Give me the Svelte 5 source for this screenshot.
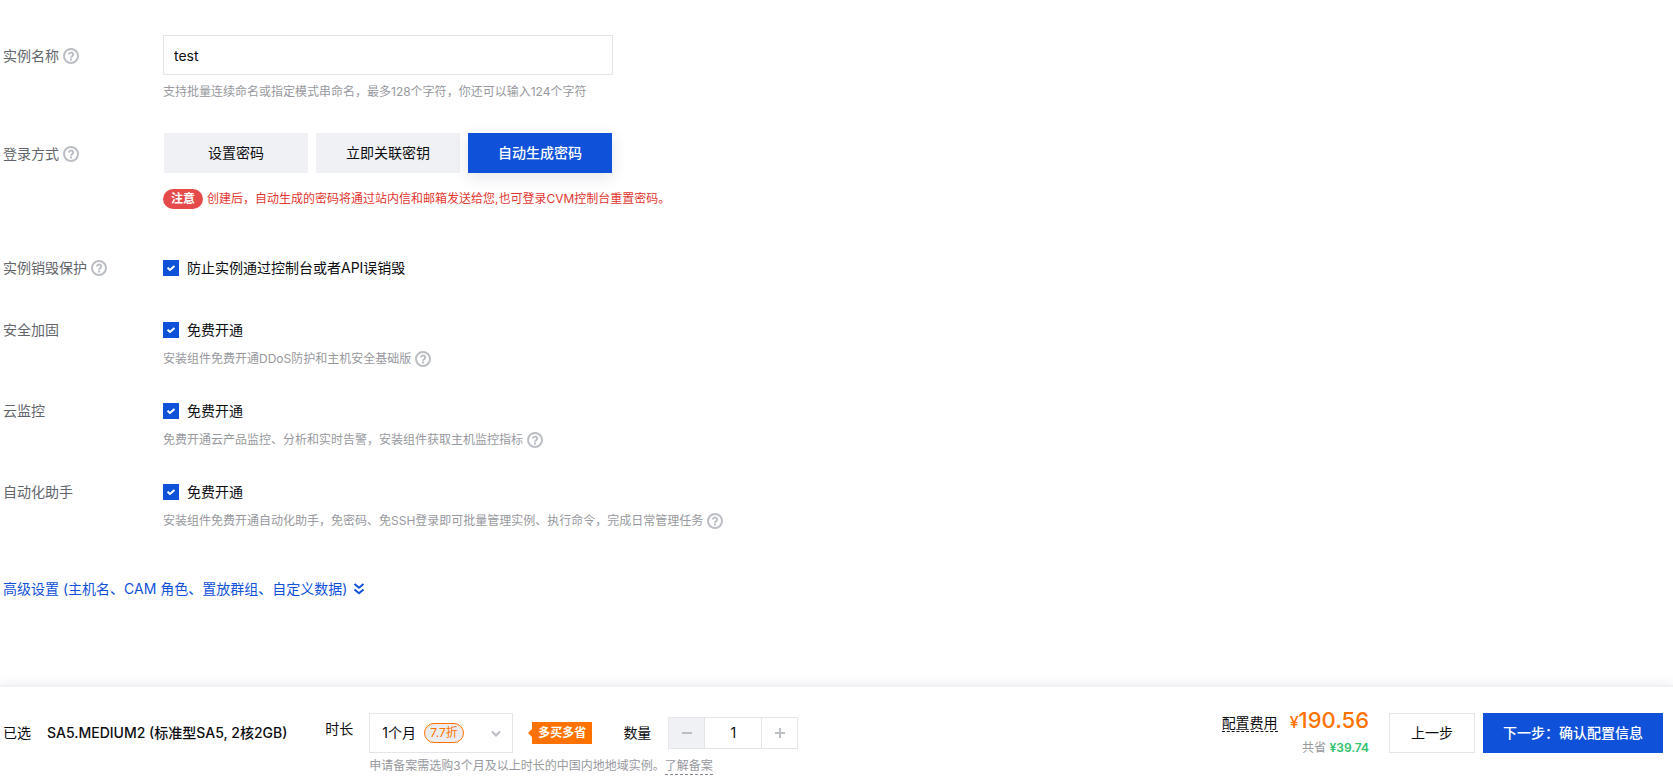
<script>
    const maxName = 128
    const unitPrice = 190.56
    const unitSaved = 39.74
    const loginTypes = ['设置密码', '立即关联密钥', '自动生成密码']
    const durations = ['1个月', '2个月', '3个月', '6个月', '1年']

    let name = 'test'
    let login = '自动生成密码'
    let protect = true
    let duration = '1个月'
    let count = 1
    let services = [
        { id: 'security', label: '安全加固', checked: true, hint: '安装组件免费开通DDoS防护和主机安全基础版' },
        { id: 'monitor', label: '云监控', checked: true, hint: '免费开通云产品监控、分析和实时告警，安装组件获取主机监控指标' },
        { id: 'assistant', label: '自动化助手', checked: true, hint: '安装组件免费开通自动化助手，免密码、免SSH登录即可批量管理实例、执行命令，完成日常管理任务' }
    ]

    $: left = maxName - name.length
    $: total = (unitPrice * count).toFixed(2)
    $: saved = (unitSaved * count).toFixed(2)
</script>

{#snippet help()}
    <svg class="help" viewBox="0 0 16 16" width="16" height="16" aria-hidden="true">
        <circle cx="8" cy="8" r="7" />
        <path d="M5.9 6.6a2.1 2.1 0 1 1 3.3 1.7C8.4 8.8 8 9 8 9.7" />
        <path d="M8 10.6v1.8" />
    </svg>
{/snippet}

<div class="page" lang="zh-CN">
    <main>
        <div class="row">
            <label class="name tall" for="instance-name">实例名称 {@render help()}</label>
            <div class="content">
                <input class="text" id="instance-name" type="text" maxlength={maxName} bind:value={name}>
                <p class="hint">支持批量连续命名或指定模式串命名，最多{maxName}个字符，你还可以输入{left}个字符</p>
            </div>
        </div>

        <div class="row login">
            <div class="name tall" id="login-label">登录方式 {@render help()}</div>
            <div class="content">
                <div class="segment" role="group" aria-labelledby="login-label">
                    {#each loginTypes as type}
                        <button type="button" class:active={login === type} on:click={() => login = type}>{type}</button>
                    {/each}
                </div>
                <p class="notice"><b>注意</b>创建后，自动生成的密码将通过站内信和邮箱发送给您,也可登录CVM控制台重置密码。</p>
            </div>
        </div>

        <div class="row protect">
            <div class="name">实例销毁保护 {@render help()}</div>
            <label class="check"><input type="checkbox" bind:checked={protect}>防止实例通过控制台或者API误销毁</label>
        </div>

        {#each services as item (item.id)}
            <div class="row">
                <div class="name">{item.label}</div>
                <div class="content">
                    <label class="check"><input type="checkbox" bind:checked={item.checked}>免费开通</label>
                    <p class="hint service">{item.hint} {@render help()}</p>
                </div>
            </div>
        {/each}

        <a class="advanced" href="#advanced">
            高级设置 (主机名、CAM 角色、置放群组、自定义数据)
            <svg viewBox="0 0 12 12" width="12" height="12" aria-hidden="true">
                <path d="M1.5 1 6 4.8 10.5 1M1.5 6.5 6 10.3l4.5-3.8" />
            </svg>
        </a>
    </main>

    <footer>
        <div class="chosen">
            <span>已选</span>
            <strong>SA5.MEDIUM2 (标准型SA5, 2核2GB)</strong>
        </div>
        <label class="time" for="duration">时长</label>
        <div class="order">
            <div class="controls">
                <div class="select">
                    <select id="duration" bind:value={duration}>
                        {#each durations as d}
                            <option>{d}</option>
                        {/each}
                    </select>
                    <span class="discount">7.7折</span>
                    <svg viewBox="0 0 10 10" width="10" height="10" aria-hidden="true"><path d="M1 2.5 5 6.5l4-4" /></svg>
                </div>
                <span class="tag">多买多省</span>
                <label for="count">数量</label>
                <div class="stepper">
                    <button type="button" aria-label="减少" disabled={count <= 1} on:click={() => count--}>
                        <svg viewBox="0 0 10 10" width="10" height="10"><path d="M0 5h10" /></svg>
                    </button>
                    <input id="count" type="text" inputmode="numeric" bind:value={count}>
                    <button type="button" aria-label="增加" on:click={() => count++}>
                        <svg viewBox="0 0 10 10" width="10" height="10"><path d="M0 5h10M5 0v10" /></svg>
                    </button>
                </div>
            </div>
            <p class="hint">申请备案需选购3个月及以上时长的中国内地地域实例。<a href="#beian">了解备案</a></p>
        </div>
        <div class="cost">
            <div class="total">
                <span class="cost-label">配置费用</span>
                <span class="price"><small>¥</small>{total}</span>
            </div>
            <div class="saved">共省 <b>¥{saved}</b></div>
        </div>
        <div class="actions">
            <button type="button" class="prev">上一步</button>
            <button type="button" class="next">下一步：确认配置信息</button>
        </div>
    </footer>
</div>

<style>
    :global(body) {
        margin: 0;
        background: #fff;
    }
    .page {
        display: flex;
        flex-direction: column;
        min-height: 100vh;
        color: #0c0d10;
        font: 14px/20px Inter, "Noto Sans CJK SC", sans-serif;
    }
    .page * {
        box-sizing: border-box;
    }
    button, input, select {
        font: inherit;
        color: inherit;
        border-radius: 0;
    }
    button {
        cursor: pointer;
    }
    p {
        margin: 0;
    }
    svg {
        fill: none;
        stroke: currentColor;
        flex: none;
    }
    main {
        padding: 35px 3px 24px;
    }
    .row {
        display: flex;
        margin-bottom: 32px;
    }
    .name {
        display: flex;
        align-items: center;
        gap: 4px;
        width: 160px;
        height: 20px;
        flex: none;
        color: #62656b;
    }
    .tall {
        height: 42px;
    }
    .help {
        color: #bbbec4;
        stroke-width: 2;
    }
    .text {
        display: block;
        width: 450px;
        height: 40px;
        padding: 0 10px;
        border: 1px solid #e4e5e8;
        outline: none;
    }
    .hint {
        display: flex;
        align-items: center;
        gap: 4px;
        margin-top: 7px;
        margin-bottom: -1px;
        font-size: 12px;
        color: #97999e;
    }
    .service {
        margin: 9px 0 0;
    }
    .login {
        margin-bottom: 49px;
    }
    .protect {
        margin-bottom: 42px;
    }
    .segment {
        display: flex;
        gap: 8px;
        padding-left: 1px;
    }
    .segment button {
        width: 144px;
        height: 40px;
        padding: 0;
        border: 0;
        background: #f0f1f5;
    }
    .segment .active {
        background: #0f52d9;
        color: #fff;
        font-weight: 500;
        box-shadow: 0 4px 16px rgba(30, 40, 70, .12);
    }
    .notice {
        display: flex;
        align-items: center;
        gap: 4px;
        margin-top: 16px;
        font-size: 12px;
        color: #e2362f;
    }
    .notice b {
        padding: 0 8px;
        border-radius: 10px;
        background: #e54b4b;
        color: #fff;
    }
    .check {
        display: flex;
        align-items: center;
        gap: 8px;
    }
    .check input {
        appearance: none;
        width: 16px;
        height: 16px;
        margin: 0;
        border: 1px solid #c4c7cc;
    }
    .check input:checked {
        border-color: #0f52d9;
        background: #0f52d9 url("data:image/svg+xml,%3Csvg xmlns='http://www.w3.org/2000/svg' viewBox='0 0 14 14'%3E%3Cpath d='M3.5 6.8 6 9l4.5-4' fill='none' stroke='white' stroke-width='2'/%3E%3C/svg%3E") center / 14px;
    }
    .advanced {
        display: inline-flex;
        align-items: center;
        gap: 6px;
        margin-top: 16px;
        color: #0f52d9;
        text-decoration: none;
    }
    .advanced svg {
        stroke-width: 2;
    }
    footer {
        display: flex;
        align-items: flex-start;
        margin-top: auto;
        padding: 26px 10px 2px 3px;
        border-top: 2px solid #f0f1f5;
        box-shadow: 0 -2px 10px rgba(30, 40, 70, .07);
        white-space: nowrap;
    }
    .chosen {
        display: flex;
        gap: 16px;
        line-height: 40px;
    }
    strong {
        font-weight: 500;
    }
    .time {
        margin: 0 16px 0 38px;
        line-height: 32px;
    }
    .controls {
        display: flex;
        align-items: center;
    }
    .order .hint {
        gap: 0;
        margin: 3px 0 0;
    }
    .hint a {
        color: inherit;
        line-height: 16px;
        text-decoration: none;
        border-bottom: 1px dashed #85888e;
    }
    .select {
        position: relative;
        width: 144px;
        height: 40px;
    }
    select {
        appearance: none;
        width: 100%;
        height: 100%;
        padding: 0 12px;
        border: 1px solid #e4e5e8;
        background: #fff;
    }
    .discount {
        position: absolute;
        top: 10px;
        left: 55px;
        height: 20px;
        padding: 0 5px;
        border: 1px solid #ff7200;
        border-radius: 10px;
        background: #ececef;
        color: #ff7200;
        font-size: 12px;
        line-height: 18px;
        pointer-events: none;
    }
    .select svg {
        position: absolute;
        top: 16px;
        right: 12px;
        color: #bbbec4;
        stroke-width: 2;
        pointer-events: none;
    }
    .tag {
        position: relative;
        margin: 0 31px 0 19px;
        padding: 0 6px;
        background: #ff7200;
        color: #fff;
        font-size: 12px;
        font-weight: 700;
        line-height: 22px;
    }
    .tag::before {
        content: "";
        position: absolute;
        top: 7px;
        left: -4px;
        border: solid transparent;
        border-width: 4px 4px 4px 0;
        border-right-color: #ff7200;
    }
    .stepper {
        display: flex;
        width: 130px;
        height: 32px;
        margin-left: 17px;
        border: 1px solid #e4e5e8;
    }
    .stepper button {
        display: flex;
        align-items: center;
        justify-content: center;
        width: 35px;
        flex: none;
        padding: 0;
        border: 0;
        background: #fff;
        color: #bbbec4;
        stroke-width: 2;
    }
    .stepper button:disabled {
        background: #f0f1f5;
    }
    .stepper input {
        flex: 1;
        min-width: 0;
        padding: 0;
        border: solid #e4e5e8;
        border-width: 0 1px;
        text-align: center;
        outline: none;
    }
    .cost {
        margin: -5px 20px 0 auto;
        text-align: right;
    }
    .total {
        display: flex;
        align-items: baseline;
        gap: 12px;
        line-height: 24px;
    }
    .cost-label {
        line-height: 16px;
        border-bottom: 1px dashed #16181d;
    }
    .price {
        color: #ff7200;
        font-size: 22px;
        font-weight: 500;
    }
    small {
        font-size: 16px;
    }
    .saved {
        margin-top: 4px;
        color: #97999e;
        font-size: 12px;
    }
    .saved b {
        color: #2dc26b;
        font-weight: 600;
    }
    .actions {
        display: flex;
        gap: 8px;
    }
    .actions button {
        height: 40px;
        padding: 0 20px;
        border: 0;
    }
    .actions .prev {
        padding: 0 21px;
        border: 1px solid #e4e5e8;
        background: #fff;
    }
    .actions .next {
        background: #0f52d9;
        color: #fff;
        font-weight: 500;
    }
</style>
